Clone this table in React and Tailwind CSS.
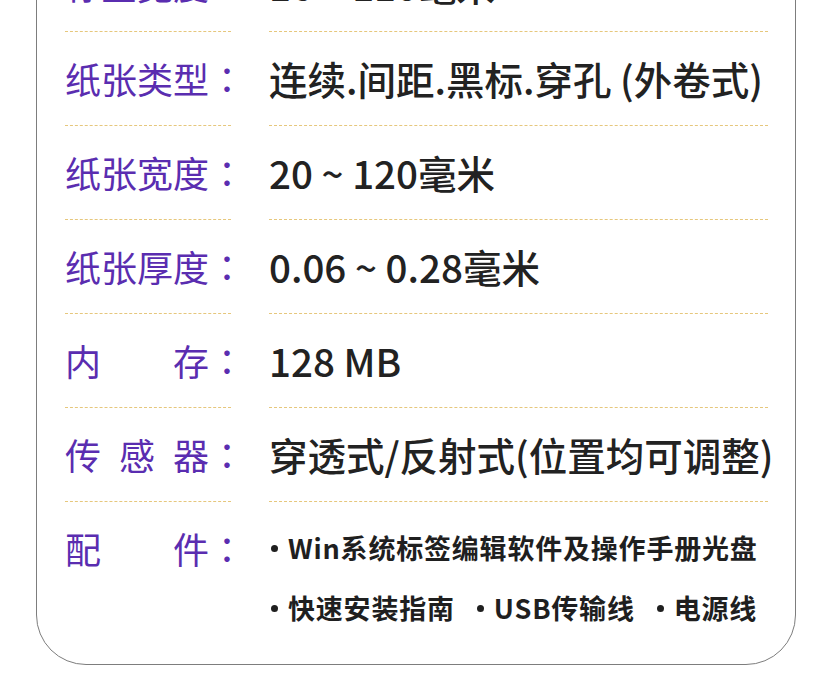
import React from "react";

const FONT = { fontFamily: '"Noto Sans CJK SC", "Noto Sans", sans-serif' };
const COLON = { fontFamily: '"Noto Sans CJK TC", "Noto Sans CJK SC", sans-serif' };

const rows = [
  { label: ["标签宽度"], value: "16 ~ 110毫米" },
  { label: ["纸张类型"], value: "连续.间距.黑标.穿孔 (外卷式)" },
  { label: ["纸张宽度"], value: "20 ~ 120毫米" },
  { label: ["纸张厚度"], value: "0.06 ~ 0.28毫米" },
  { label: ["内", "存"], value: "128 MB" },
  { label: ["传", "感", "器"], value: "穿透式/反射式(位置均可调整)" },
];

const Label = ({ parts }) => (
  <div className="flex w-[180px] justify-between whitespace-nowrap text-[36px] leading-[45px] text-[#5a2db0]">
    {parts.map((p, i) => (
      <span key={p} className="whitespace-nowrap">
        {p}
        {i === parts.length - 1 && <span style={COLON}>：</span>}
      </span>
    ))}
  </div>
);

const Row = ({ label, value }) => (
  <div className="flex">
    <div className="w-[166px] shrink-0 border-b border-dashed border-[#e6c77c] pt-[24px] pb-[24px]">
      <Label parts={label} />
    </div>
    <div className="ml-[38px] min-w-0 flex-1 border-b border-dashed border-[#e6c77c] pt-[24px] pb-[24px] text-[38.5px] leading-[45px] font-medium text-[#222222] whitespace-nowrap">
      {value}
    </div>
  </div>
);

const Bullet = ({ children }) => (
  <span className="flex items-center">
    <span className="mr-[10px] h-[7px] w-[7px] rounded-full bg-[#1f1f1f]" />
    {children}
  </span>
);

export default function App() {
  return (
    <div className="min-h-screen overflow-hidden bg-white" style={FONT}>
      <div className="ml-[36px] -mt-[63px] w-[760px] rounded-b-[50px] border-[1.5px] border-[#7d7d7d] pl-[28px] pr-[27px] pb-[26px]">
        {rows.map((r) => (
          <Row key={r.value} label={r.label} value={r.value} />
        ))}
        <div className="flex">
          <div className="w-[166px] shrink-0 pt-[24px]">
            <Label parts={["配", "件"]} />
          </div>
          <div className="ml-[40px] min-w-0 flex-1 pt-[16px] text-[27px] leading-[60px] font-bold tracking-[0.8px] text-[#1f1f1f] whitespace-nowrap">
            <Bullet>Win系统标签编辑软件及操作手册光盘</Bullet>
            <div className="flex gap-[22px]">
              <Bullet>快速安装指南</Bullet>
              <Bullet>USB传输线</Bullet>
              <Bullet>电源线</Bullet>
            </div>
          </div>
        </div>
      </div>
    </div>
  );
}
